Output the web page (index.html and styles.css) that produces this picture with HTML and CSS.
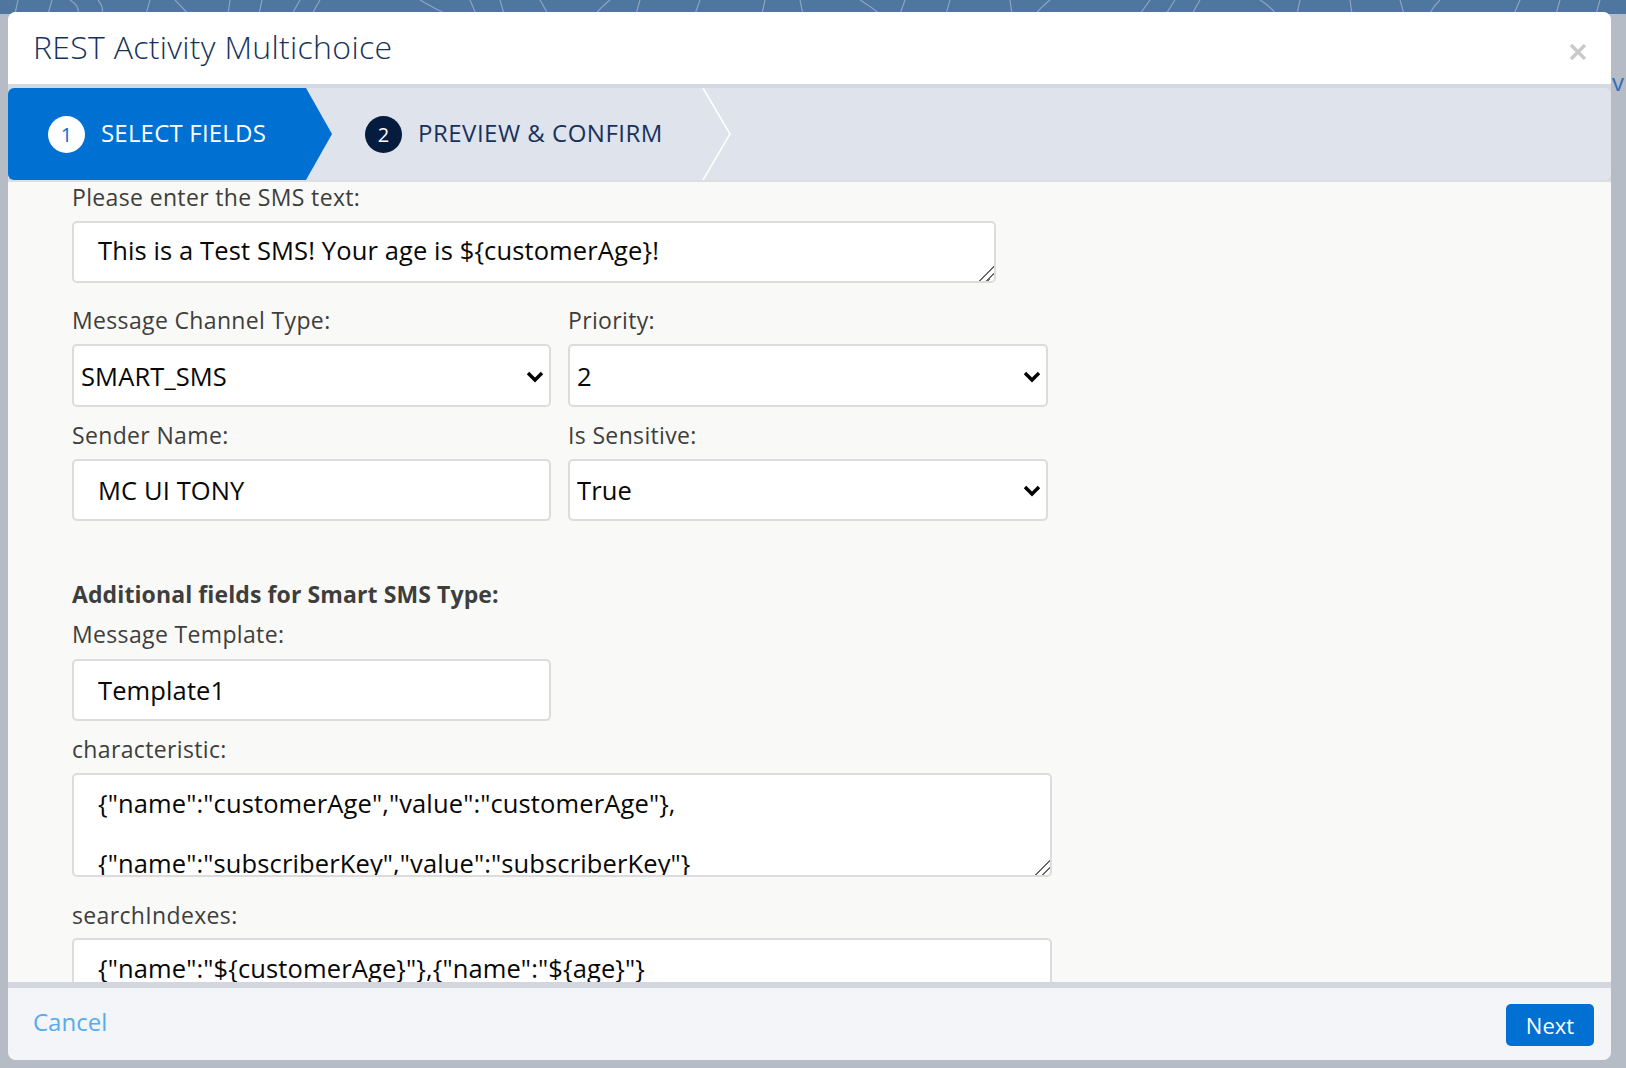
FILE: index.html
```html
<!DOCTYPE html>
<html lang="en">
<head>
<meta charset="utf-8">
<title>REST Activity Multichoice</title>
<link rel="stylesheet" href="styles.css">
</head>
<body>
<div class="backdrop">
  <svg class="backdrop-pattern" width="1626" height="14" viewBox="0 0 1626 14" aria-hidden="true">
    <g fill="none" stroke="rgba(255,255,255,0.35)" stroke-width="1.2">
      <path d="M18 0 L15 14"/><path d="M52 0 L48 14"/><path d="M70 0 Q80 6 78 14"/><path d="M98 0 Q104 7 102 14"/>
      <path d="M150 0 L146 14"/><path d="M175 0 Q182 7 188 14"/><path d="M230 0 L228 14"/><path d="M262 0 L259 14"/>
      <path d="M300 0 Q296 7 292 14"/><path d="M320 0 L312 14"/><path d="M420 0 Q430 6 446 14"/><path d="M470 0 L476 14"/>
      <path d="M500 0 L504 14"/><path d="M540 0 L548 14"/><path d="M610 0 Q600 8 596 14"/><path d="M640 0 L636 14"/>
      <path d="M700 0 L695 14"/><path d="M765 0 L762 14"/><path d="M800 0 L803 14"/><path d="M860 0 Q870 6 880 14"/>
      <path d="M905 0 L900 14"/><path d="M950 0 L946 14"/><path d="M1010 0 L1012 14"/><path d="M1050 0 Q1040 8 1036 14"/>
      <path d="M1150 0 L1140 14"/><path d="M1175 0 L1166 14"/><path d="M1200 0 L1192 14"/><path d="M1260 0 Q1270 6 1276 14"/>
      <path d="M1300 0 L1297 14"/><path d="M1350 0 L1352 14"/><path d="M1400 0 L1404 14"/><path d="M1440 0 Q1432 8 1430 14"/>
      <path d="M1520 0 L1514 14"/><path d="M1560 0 L1556 14"/><path d="M1600 0 L1596 14"/>
    </g>
  </svg>
  <span class="behind-text">v</span>

  <div class="modal">
    <header class="modal-header">
      <h1 class="modal-title">REST Activity Multichoice</h1>
      <button class="modal-close" type="button" aria-label="Close">
        <svg width="18" height="18" viewBox="0 0 18 18"><path d="M2 2 L16 16 M16 2 L2 16" stroke="#c9c9c9" stroke-width="3.2" stroke-linecap="butt"/></svg>
      </button>
    </header>

    <nav class="stepper">
      <div class="step step-active">
        <span class="step-num">1</span>
        <span class="step-label">SELECT FIELDS</span>
      </div>
      <div class="step step-pending">
        <span class="step-num">2</span>
        <span class="step-label step-label-wide">PREVIEW &amp; CONFIRM</span>
        <svg class="step-divider" width="30" height="92" viewBox="0 0 30 92" aria-hidden="true"><path d="M1 0 L28 46 L1 92" fill="none" stroke="#ffffff" stroke-width="1.5"/></svg>
      </div>
    </nav>

    <main class="modal-body">
      <div class="form">
        <div class="field">
          <label class="field-label">Please enter the SMS text:</label>
          <textarea class="control textarea textarea-sms">This is a Test SMS! Your age is ${customerAge}!</textarea>
        </div>

        <div class="field-grid grid-first">
          <div class="field">
            <label class="field-label">Message Channel Type:</label>
            <div class="select-wrap">
              <select class="control select"><option>SMART_SMS</option></select>
              <svg class="chevron" width="18" height="12" viewBox="0 0 18 12"><path d="M2 2 L9 9 L16 2" fill="none" stroke="#000" stroke-width="3.4"/></svg>
            </div>
          </div>
          <div class="field">
            <label class="field-label">Priority:</label>
            <div class="select-wrap">
              <select class="control select"><option>2</option></select>
              <svg class="chevron" width="18" height="12" viewBox="0 0 18 12"><path d="M2 2 L9 9 L16 2" fill="none" stroke="#000" stroke-width="3.4"/></svg>
            </div>
          </div>
        </div>

        <div class="field-grid grid-second">
          <div class="field">
            <label class="field-label">Sender Name:</label>
            <input class="control input" type="text" value="MC UI TONY">
          </div>
          <div class="field">
            <label class="field-label">Is Sensitive:</label>
            <div class="select-wrap">
              <select class="control select"><option>True</option></select>
              <svg class="chevron" width="18" height="12" viewBox="0 0 18 12"><path d="M2 2 L9 9 L16 2" fill="none" stroke="#000" stroke-width="3.4"/></svg>
            </div>
          </div>
        </div>

        <h2 class="section-title">Additional fields for Smart SMS Type:</h2>

        <div class="field field-template">
          <label class="field-label">Message Template:</label>
          <input class="control input input-half" type="text" value="Template1">
        </div>

        <div class="field field-char">
          <label class="field-label">characteristic:</label>
          <textarea class="control textarea textarea-wide">{"name":"customerAge","value":"customerAge"},

{"name":"subscriberKey","value":"subscriberKey"}</textarea>
        </div>

        <div class="field field-search">
          <label class="field-label">searchIndexes:</label>
          <textarea class="control textarea textarea-wide textarea-search">{"name":"${customerAge}"},{"name":"${age}"}</textarea>
        </div>
      </div>
    </main>

    <footer class="modal-footer">
      <a class="cancel-link" href="#">Cancel</a>
      <button class="btn-next" type="button">Next</button>
    </footer>
  </div>
</div>
</body>
</html>
```

FILE: styles.css
```css
* { box-sizing: border-box; }

html, body {
  margin: 0;
  padding: 0;
  width: 1626px;
  height: 1068px;
  overflow: hidden;
}

body {
  font-family: "Open Sans", "Noto Sans", Arial, sans-serif;
  background: #b5bcc5;
}

.backdrop {
  position: relative;
  width: 1626px;
  height: 1068px;
  padding: 12px 0 0 8px;
  background: linear-gradient(#4e769f 0, #4e769f 14px, #b5bcc5 14px);
}

.backdrop-pattern {
  position: absolute;
  left: 0;
  top: 0;
}

.behind-text {
  position: absolute;
  left: 1612px;
  top: 68px;
  font-size: 24px;
  color: #2f6fba;
  line-height: 28px;
}

.modal {
  position: relative;
  width: 1603px;
  height: 1048px;
  display: flex;
  flex-direction: column;
  background: #d5d9e1;
  border-radius: 8px;
  overflow: hidden;
}

.modal-header {
  height: 76px;
  flex: none;
  display: flex;
  align-items: center;
  justify-content: space-between;
  padding: 0 24px 4px 25px;
  background: #ffffff;
  border-bottom: 4px solid #d5d9e1;
}

.modal-title {
  margin: 0;
  font-size: 32px;
  font-weight: 300;
  color: #16325c;
  letter-spacing: 0.3px;
}

.modal-close {
  border: 0;
  background: none;
  padding: 0;
  margin-top: 11px;
  width: 18px;
  height: 18px;
  display: flex;
}

.stepper {
  height: 92px;
  flex: none;
  display: flex;
  background: #dfe3ec;
  border-radius: 6px;
  overflow: hidden;
}

.step {
  display: flex;
  align-items: center;
  height: 92px;
}

.step-active {
  width: 324px;
  padding-left: 40px;
  background: #0070d2;
  clip-path: polygon(0 0, 298px 0, 100% 50%, 298px 100%, 0 100%);
  color: #ffffff;
}

.step-pending {
  width: 400px;
  padding-left: 33px;
  color: #16325c;
}

.step-num {
  width: 37px;
  height: 37px;
  border-radius: 50%;
  display: flex;
  align-items: center;
  justify-content: center;
  font-size: 20px;
  flex: none;
  margin-right: 16px;
}

.step-active .step-num {
  background: #ffffff;
  color: #0070d2;
}

.step-pending .step-num {
  background: #061c3f;
  color: #ffffff;
}

.step-label {
  font-size: 24px;
  letter-spacing: 0.2px;
  padding-bottom: 4px;
}

.step-label-wide {
  letter-spacing: 0.5px;
}

.step-divider {
  margin-left: auto;
  flex: none;
}

.modal-body {
  flex: 1;
  min-height: 0;
  overflow: hidden;
  background: #f9f9f8;
  border-top: 2px solid #dedede;
}

.form {
  padding-left: 64px;
}

.field {
  display: flex;
  flex-direction: column;
}

.field-label {
  font-size: 23px;
  line-height: 30px;
  letter-spacing: 0.35px;
  color: #3e3e3c;
  margin-bottom: 9px;
}

.control {
  font-family: "Open Sans", "Noto Sans", Arial, sans-serif;
  font-size: 25.5px;
  letter-spacing: 0.12px;
  color: #080707;
  background: #ffffff;
  border: 2px solid #dcdcdc;
  border-radius: 5px;
  outline: none;
}

.textarea {
  line-height: 30px;
  padding: 12px 24px 0 24px;
  overflow: hidden;
  resize: vertical;
}

.textarea::-webkit-resizer {
  background: linear-gradient(135deg, transparent 0 47%, #666 47% 55%, transparent 55% 72%, #666 72% 80%, transparent 80%);
}

.textarea-sms {
  width: 924px;
  height: 62px;
}

.textarea-wide {
  width: 980px;
  height: 104px;
  padding-top: 13px;
}

.field-grid {
  display: grid;
  grid-template-columns: 479px 480px;
  column-gap: 17px;
}

.grid-first { margin-top: 22px; }
.grid-second { margin-top: 13px; }

.select-wrap {
  position: relative;
}

.select {
  width: 100%;
  height: 63px;
  padding: 0 40px 0 7px;
  appearance: none;
  -webkit-appearance: none;
}

.grid-second .select { height: 62px; }

.chevron {
  position: absolute;
  right: 7px;
  top: 50%;
  margin-top: -5px;
  pointer-events: none;
}

.input {
  height: 62px;
  padding: 0 24px;
}

.input-half { width: 479px; }

.section-title {
  margin: 58px 0 0 0;
  font-size: 23px;
  line-height: 30px;
  letter-spacing: 0.1px;
  font-weight: 700;
  color: #3e3e3c;
}

.field-template { margin-top: 10px; }
.field-template .field-label { margin-bottom: 10px; }
.field-char { margin-top: 13px; }
.field-search { margin-top: 23px; }
.field-search .field-label { margin-bottom: 8px; }

.modal-footer {
  height: 78px;
  flex: none;
  display: flex;
  align-items: center;
  justify-content: space-between;
  padding: 0 17px 0 25px;
  background: #f3f5f8;
  border-top: 6px solid #d3d6de;
}

.cancel-link {
  font-size: 24px;
  color: #5aaaf0;
  text-decoration: none;
  margin-top: -6px;
}

.btn-next {
  width: 88px;
  height: 42px;
  border: 0;
  border-radius: 5px;
  background: #0070d2;
  color: #ffffff;
  font-family: "Open Sans", "Noto Sans", Arial, sans-serif;
  font-size: 22px;
  padding: 0;
  margin-top: 2px;
}
```
